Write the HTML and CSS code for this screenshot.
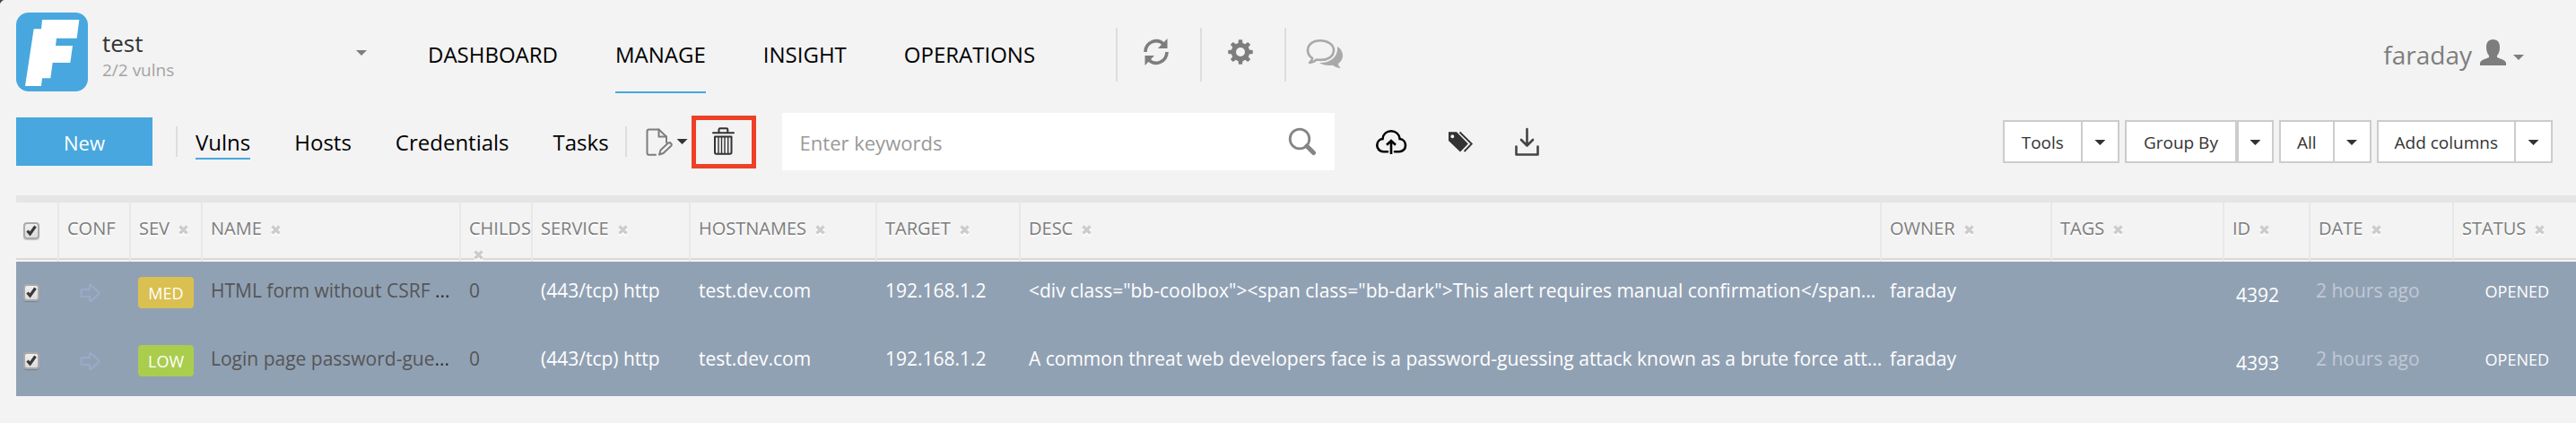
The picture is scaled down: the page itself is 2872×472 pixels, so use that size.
FILE: index.html
```html
<!DOCTYPE html>
<html lang="en">
<head>
<meta charset="utf-8">
<title>Faraday - Manage</title>
<link rel="stylesheet" href="styles.css">
</head>
<body>
<header class="topbar">
  <a class="logo" href="#" aria-label="Faraday">
    <svg viewBox="0 0 240 264" width="80" height="88"><rect width="240" height="264" rx="42" fill="#48a7de"/><path fill="#fff" d="M87 24H211L203 86H135L132 111H189L181 168H122L115 220H87L84 246H30L59 55H84Z"/></svg>
  </a>
  <button class="workspace" type="button">
    <span class="workspace-text"><span class="workspace-name">test</span><span class="workspace-count">2/2 vulns</span></span>
    <span class="caret caret-grey"></span>
  </button>
  <nav class="mainnav">
    <a href="#">DASHBOARD</a>
    <a href="#" class="active">MANAGE</a>
    <a href="#">INSIGHT</a>
    <a href="#">OPERATIONS</a>
  </nav>
  <div class="quick">
    <button type="button" aria-label="Refresh"><svg width="28" height="30" viewBox="0 0 28 30"><g fill="none" stroke="#7d7d7d" stroke-width="3.6"><path d="M2 15A12 12.5 0 0 1 22.500 6.500"/><path d="M26 15A12 12.500 0 0 1 5.500 23.500"/></g><path fill="#7d7d7d" d="M26.500 0V11H16ZM1.500 30V19H12Z"/></svg></button>
    <button type="button" aria-label="Settings"><svg width="28" height="28" viewBox="-14 -14 28 28"><g fill="#7d7d7d"><path id="t" d="M-2.600-9L-2-13.700H2L2.600-9V9L2 13.700H-2L-2.600 9Z"/><use href="#t" transform="rotate(45)"/><use href="#t" transform="rotate(90)"/><use href="#t" transform="rotate(135)"/><circle r="10.300"/></g><circle r="5" fill="#f3f3f3"/></svg></button>
    <button type="button" aria-label="Messages" class="chat"><svg width="42" height="34" viewBox="0 0 42 34"><path fill="none" stroke="#a9a9a9" stroke-width="2.600" stroke-linejoin="round" d="M16 2.200C8 2.200 2 6.700 2 13C2 17 4 20 7.200 22C6.800 24 6 25.200 4.200 27C8 26.400 10 25.400 12 23.500C24 25.400 31 20 31 13C31 6.700 24 2.200 16 2.200Z"/><path fill="#a9a9a9" d="M35 9C38.500 11 41 14.500 41 19C41 23 39 26 36 28C36.200 30 37 31.500 39 33C35 33 32 31.800 30 29.800C24 30.500 18 29.500 15 27C26 27.500 36 21.500 35 9Z"/></svg></button>
  </div>
  <button class="user" type="button"><span>faraday</span>
    <svg width="29" height="29" viewBox="0 0 29 29"><path fill="#7d7d7d" d="M14.500 0C19.500 0 22 3.500 22 8.500C22 12.500 21 16 19 18V20C22 21.500 29 23 29 26.500V29H0V26.500C0 23 7 21.500 10 20V18C8 16 7 12.500 7 8.500C7 3.500 9.500 0 14.500 0Z"/></svg>
    <span class="caret caret-grey"></span>
  </button>
</header>

<div class="toolbar">
  <button class="new" type="button">New</button>
  <span class="rule rule-new"></span>
  <nav class="subnav">
    <a href="#" class="active">Vulns</a>
    <a href="#">Hosts</a>
    <a href="#">Credentials</a>
    <a href="#">Tasks</a>
  </nav>
  <span class="rule rule-edit"></span>
  <button class="edit" type="button" aria-label="Edit"><svg width="31" height="31" viewBox="0 0 31 31" fill="none" stroke="#7d7d7d" stroke-width="2" stroke-linecap="round" stroke-linejoin="round"><path d="M12 29.800H4.500Q2.500 29.800 2.500 27.800V3.500Q2.500 1.500 4.500 1.500H15.500L24 9.500V16"/><path d="M15.500 1.500V9.500H24"/><path d="M16 29.500L17.500 24.500L26 16.500Q27.500 15.500 29 17T29 20L20.500 28Z"/></svg><span class="caret"></span></button>
  <button class="trash" type="button" aria-label="Delete"><svg width="25" height="31" viewBox="0 0 25 31" fill="none" stroke="#333" stroke-width="2" stroke-linejoin="round"><path d="M7.500 6V2.500Q7.500 1.200 8.800 1.200H16Q17.300 1.200 17.300 2.500V6"/><path d="M1 6.300H24" stroke-linecap="round"/><path d="M3 10.500H21.500V28Q21.500 29.800 19.700 29.800H4.800Q3 29.800 3 28Z"/><path d="M7 11V29M10.500 11V29M14 11V29M17.700 11V29" stroke-width="1.400"/></svg></button>
  <form class="search">
    <input type="text" placeholder="Enter keywords" aria-label="Enter keywords">
    <button type="submit" aria-label="Search"><svg width="32" height="32" viewBox="0 0 32 32" fill="none" stroke="#858585"><circle cx="13" cy="13" r="10.800" stroke-width="2.800"/><path d="M21 21L28.500 28.500" stroke-width="5" stroke-linecap="round"/></svg></button>
  </form>
  <div class="actions">
    <button type="button" aria-label="Upload"><svg width="36" height="28" viewBox="0 0 36 28" fill="none" stroke="#000" stroke-width="2.600"><path stroke-linecap="round" d="M14 25.300H9.500C5.500 25.300 2.300 22.200 2.300 18.300C2.300 14.300 5 11.400 8.500 11C9 5.600 13 2.300 18 2.300S27 5.600 27.600 11C31.200 11.300 34 14.300 34 18.200C34 22.200 30.800 25.300 26.800 25.300H22"/><path d="M18 28V13.500M13 17.800L18 13L23 17.800"/></svg></button>
    <button type="button" aria-label="Tag"><svg width="29" height="25" viewBox="0 0 29 25"><path fill="#333" fill-rule="evenodd" d="M1 1.300H10L22.800 14.500L14 23.500L1 11ZM5.300 4.300A2 2 0 1 0 5.300 8.300A2 2 0 1 0 5.300 4.300Z"/><path fill="none" stroke="#333" stroke-width="1.800" d="M13.500 1.500L26.800 14.500L18.500 23"/></svg></button>
    <button type="button" aria-label="Download"><svg width="29" height="34" viewBox="0 0 29 34" fill="none" stroke="#444" stroke-width="2.600" stroke-linecap="round" stroke-linejoin="round"><path d="M2.500 22.500V31.500H26.500V22.500M14.500 3V21M8 15L14.500 21.500L21 15"/></svg></button>
  </div>
  <div class="menus">
    <div class="split wide"><button type="button">Tools</button><button type="button" aria-label="Open Tools"><span class="caret"></span></button></div>
    <div class="split wide double"><button type="button">Group By</button><button type="button" aria-label="Open Group By"><span class="caret"></span></button></div>
    <div class="split"><button type="button">All</button><button type="button" aria-label="Open All"><span class="caret"></span></button></div>
    <div class="split"><button type="button">Add columns</button><button type="button" aria-label="Open Add columns"><span class="caret"></span></button></div>
  </div>
</div>

<svg class="defs" aria-hidden="true">
  <symbol id="x" viewBox="0 0 11 11"><path d="M1.500 1.500L9.500 9.500M9.500 1.500L1.500 9.500" stroke="#ccc" stroke-width="3.400"/></symbol>
  <symbol id="tick" viewBox="0 0 18 18"><path d="M4.500 9.500L7.500 13L13.500 4.500" fill="none" stroke="#3a3a3a" stroke-width="3.200"/></symbol>
  <symbol id="arrow" viewBox="0 0 23 22"><path d="M2 7H11V2.500Q11.500 1.500 12.500 2.200L21 10Q21.700 11 21 12L12.500 19.800Q11.500 20.500 11 19.500V15H2Q1.500 15 1.500 14V8Q1.500 7 2 7Z" fill="none" stroke="#9da9ca" stroke-width="2"/></symbol>
</svg>

<main class="grid">
<table>
  <colgroup><col class="c-check"><col class="c-80"><col class="c-80"><col class="c-name"><col class="c-80"><col class="c-service"><col class="c-host"><col class="c-target"><col><col class="c-owner"><col class="c-tags"><col class="c-id"><col class="c-date"><col class="c-status"></colgroup>
  <thead>
    <tr>
      <th><label class="check"><input type="checkbox" checked aria-label="Select all"><svg><use href="#tick"/></svg></label></th>
      <th><div>CONF</div></th>
      <th><div>SEV <button type="button" aria-label="Remove SEV"><svg><use href="#x"/></svg></button></div></th>
      <th><div>NAME <button type="button" aria-label="Remove NAME"><svg><use href="#x"/></svg></button></div></th>
      <th><div>CHILDS <button type="button" aria-label="Remove CHILDS"><svg><use href="#x"/></svg></button></div></th>
      <th><div>SERVICE <button type="button" aria-label="Remove SERVICE"><svg><use href="#x"/></svg></button></div></th>
      <th><div>HOSTNAMES <button type="button" aria-label="Remove HOSTNAMES"><svg><use href="#x"/></svg></button></div></th>
      <th><div>TARGET <button type="button" aria-label="Remove TARGET"><svg><use href="#x"/></svg></button></div></th>
      <th><div>DESC <button type="button" aria-label="Remove DESC"><svg><use href="#x"/></svg></button></div></th>
      <th><div>OWNER <button type="button" aria-label="Remove OWNER"><svg><use href="#x"/></svg></button></div></th>
      <th><div>TAGS <button type="button" aria-label="Remove TAGS"><svg><use href="#x"/></svg></button></div></th>
      <th><div>ID <button type="button" aria-label="Remove ID"><svg><use href="#x"/></svg></button></div></th>
      <th><div>DATE <button type="button" aria-label="Remove DATE"><svg><use href="#x"/></svg></button></div></th>
      <th><div>STATUS <button type="button" aria-label="Remove STATUS"><svg><use href="#x"/></svg></button></div></th>
    </tr>
  </thead>
  <tbody>
    <tr>
      <td><label class="check"><input type="checkbox" checked aria-label="Select 4392"><svg><use href="#tick"/></svg></label></td>
      <td class="conf"><svg><use href="#arrow"/></svg></td>
      <td class="sev"><span class="badge med">MED</span></td>
      <td class="dark">HTML form without CSRF <b>...</b></td>
      <td class="dark">0</td>
      <td>(443/tcp) http</td>
      <td>test.dev.com</td>
      <td>192.168.1.2</td>
      <td>&lt;div class="bb-coolbox"&gt;&lt;span class="bb-dark"&gt;This alert requires manual confirmation&lt;/span...</td>
      <td>faraday</td>
      <td></td>
      <td class="id">4392</td>
      <td class="date">2 hours ago</td>
      <td class="status">OPENED</td>
    </tr>
    <tr>
      <td><label class="check"><input type="checkbox" checked aria-label="Select 4393"><svg><use href="#tick"/></svg></label></td>
      <td class="conf"><svg><use href="#arrow"/></svg></td>
      <td class="sev"><span class="badge low">LOW</span></td>
      <td class="dark">Login page password-gue<b>...</b></td>
      <td class="dark">0</td>
      <td>(443/tcp) http</td>
      <td>test.dev.com</td>
      <td>192.168.1.2</td>
      <td>A common threat web developers face is a password-guessing attack known as a brute force att...</td>
      <td>faraday</td>
      <td></td>
      <td class="id">4393</td>
      <td class="date">2 hours ago</td>
      <td class="status">OPENED</td>
    </tr>
  </tbody>
</table>
</main>
</body>
</html>
```

FILE: styles.css
```css
* { box-sizing: border-box; }
body {
  margin: 0;
  background: #f3f3f3 radial-gradient(circle at 7px 7px, transparent 7px, #444 8px) 0 0 / 7px 7px no-repeat;
  color: #333;
  font: 21px/30px "Open Sans", "Noto Sans", sans-serif;
}
button, input { font: inherit; color: inherit; }
button { border: 0; padding: 0; background: none; cursor: pointer; }
a { color: #000; text-decoration: none; }
svg { display: block; }
.defs { display: none; }

.caret {
  flex: none;
  width: 12px;
  height: 6px;
  background: #333;
  clip-path: polygon(0 0, 100% 0, 50% 100%);
}
.caret-grey { background: #7d7d7d; }

.topbar {
  display: flex;
  align-items: flex-start;
  padding: 14px 58px 0 18px;
}
.workspace {
  display: flex;
  align-items: center;
  justify-content: space-between;
  flex: none;
  width: 295px;
  height: 90px;
  margin-left: 16px;
  text-align: left;
}
.workspace-text { display: flex; flex-direction: column; padding-top: 2px; }
.workspace-name { font-size: 26px; line-height: 36px; }
.workspace-count { font-size: 19px; line-height: 24px; color: #a3a3a3; }

.mainnav { display: flex; gap: 64px; margin-left: 68px; padding-top: 6px; }
.mainnav a { font-size: 24px; line-height: 82px; padding-bottom: 2px; }
.mainnav .active { padding-bottom: 0; border-bottom: 2px solid #48a7de; }

.quick { display: flex; align-items: center; margin: 17px 0 0 90px; }
.quick button {
  display: flex;
  justify-content: center;
  align-items: center;
  width: 94px;
  height: 60px;
  border-left: 2px solid #ddd;
  padding: 0 6px 7px 0;
}
.quick .chat { padding: 0 6px 2px 0; }

.user {
  display: flex;
  align-items: center;
  gap: 8px;
  margin: 26px 0 0 auto;
  font-size: 28px;
  line-height: 42px;
  color: #7d7d7d;
}
.user svg { margin: 0 0 6px 1px; }
.user .caret { margin-top: 6px; }

.toolbar {
  display: flex;
  align-items: center;
  height: 64px;
  margin: 22px 26px 28px 18px;
}
.new { flex: none; width: 152px; height: 54px; padding-top: 2px; background: #48a7de; color: #fff; font-size: 22px; }
.rule { flex: none; width: 2px; height: 34px; background: #ddd; }
.rule-new { margin: 0 20px 0 26px; }
.rule-edit { margin: 0 20px 0 18px; }
.subnav { display: flex; gap: 49px; padding-top: 4px; }
.subnav a { font-size: 24px; line-height: 34px; border-bottom: 2px solid transparent; }
.subnav .active { border-color: #48a7de; }
.edit { display: flex; align-items: center; gap: 5px; }
.trash {
  display: grid;
  place-items: center;
  flex: none;
  width: 72px;
  height: 59px;
  margin: 0 29px 0 4px;
  border: 5px solid #ee4026;
  padding-bottom: 2px;
}
.search {
  display: flex;
  align-items: center;
  flex: 0 1 616px;
  height: 64px;
  padding: 0 20px;
  background: #fff;
}
.search input { flex: 1; min-width: 0; border: 0; outline: 0; padding: 2px 0 0; background: none; font-size: 22px; line-height: 30px; }
.search input::placeholder { color: #999; opacity: 1; }
.actions { display: flex; align-items: center; gap: 45px; margin-left: 45px; }

.menus { display: flex; gap: 6px; margin-left: auto; }
.split { display: flex; height: 48px; border: 2px solid #ccc; background: #fff; font-size: 19px; white-space: nowrap; }
.split button { padding: 2px 18px 0; }
.split.wide button { padding: 2px 19px 0; }
.split button + button,
.split.wide button + button { display: grid; place-items: center; width: 41px; padding: 2px 0 0; border-left: 2px solid #ccc; }
.split.double button + button { border-left-width: 4px; }

.grid { margin-left: 18px; border-top: 8px solid #e5e5e5; }
table { width: 100%; table-layout: fixed; border-spacing: 0; }
.c-check { width: 46px; }
.c-80 { width: 80px; }
.c-name { width: 288px; }
.c-service { width: 176px; }
.c-host { width: 208px; }
.c-target { width: 160px; }
.c-owner { width: 190px; }
.c-tags { width: 192px; }
.c-id { width: 96px; }
.c-date { width: 160px; }
.c-status { width: 138px; }

th {
  height: 66px;
  padding: 15px 0 0 9px;
  border-left: 2px solid #e8e8e8;
  background: linear-gradient(#d9d9d9, #d9d9d9) left bottom 2px / 100% 2px no-repeat padding-box;
  font-size: 20px;
  line-height: 28px;
  font-weight: 400;
  color: #7d7d7d;
  text-align: left;
  vertical-align: top;
  text-shadow: 0 2px 0 #fff;
}
th:first-child { border-left: 0; padding: 22px 0 0 8px; }
th div { height: 50px; }
th button { margin-left: 5px; line-height: 28px; }
th button svg { width: 11px; height: 11px; filter: drop-shadow(0 2px 0 #fff); }

td {
  height: 76px;
  padding: 17px 0 0 11px;
  background: #91a1b4;
  color: #fff;
  vertical-align: top;
  white-space: nowrap;
}
tr:last-child td { height: 74px; }
td:first-child { padding: 25px 0 0 8px; }
.check { display: grid; width: 18px; }
.check > * { grid-area: 1 / 1; }
.check input {
  appearance: none;
  width: 18px;
  height: 19px;
  margin: 0;
  border: 2px solid #aaa;
  border-radius: 4px;
  background: linear-gradient(#f0f0f0, #dcdcdc);
  box-shadow: 0 1px 1px #0003;
}
.check svg { width: 18px; height: 18px; pointer-events: none; }
td.conf { padding: 24px 0 0 25px; }
.conf svg { width: 23px; height: 22px; }
td.sev { padding: 17px 0 0 10px; }
.badge { display: block; width: 62px; height: 35px; border-radius: 4px; font-size: 18px; line-height: 36px; text-align: center; }
.med { background: #dac050; }
.low { background: #aacd4e; }
td.dark { color: #555; }
.dark b { font-weight: 400; color: #333; }
td.id { padding: 22px 0 0 15px; }
td.date { padding-left: 8px; color: #c0c9d4; }
td.status { padding: 18px 30px 0 0; font-size: 18px; text-align: right; }
```
